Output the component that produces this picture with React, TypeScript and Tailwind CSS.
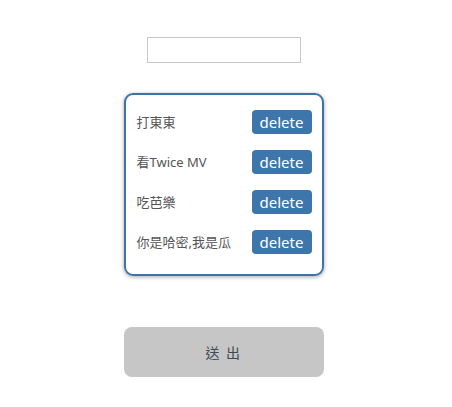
import React, { useState } from 'react';

const initial = ['打東東', '看Twice MV', '吃芭樂', '你是哈密,我是瓜'];

export default function App() {
  const [items, setItems] = useState(initial);
  const [text, setText] = useState('');

  return (
    <div
      className="w-[447px] min-h-[407px] bg-white flex flex-col items-center pt-[37px]"
      style={{ fontFamily: '"Noto Sans", "Noto Sans CJK TC", sans-serif' }}
    >
      <input
        value={text}
        onChange={(e) => setText(e.target.value)}
        className="w-[154px] h-[26px] border border-[#c8c8c8] outline-none px-1 text-sm"
      />
      <ul className="mt-[30px] w-[200px] h-[183px] border-2 border-[#3d73a6] rounded-[9px] shadow-[0_1px_4px_rgba(0,0,0,0.35)] pt-[15px] pl-[11px] pr-[10px] flex flex-col gap-[16px]">
        {items.map((item, i) => (
          <li key={i} className="flex items-center justify-between h-[24px]">
            <span className="text-[13px] text-[#555] pt-[2px]">{item}</span>
            <button
              onClick={() => setItems(items.filter((_, j) => j !== i))}
              className="w-[60px] h-[24px] rounded-[4px] bg-[#3c76ab] text-white text-[15px] leading-none"
            >
              delete
            </button>
          </li>
        ))}
      </ul>
      <button className="mt-[51px] w-[200px] h-[50px] rounded-[8px] bg-[#c6c6c6] text-[#3e4a57] text-[14px] tracking-[0.1em]">
        送 出
      </button>
    </div>
  );
}
